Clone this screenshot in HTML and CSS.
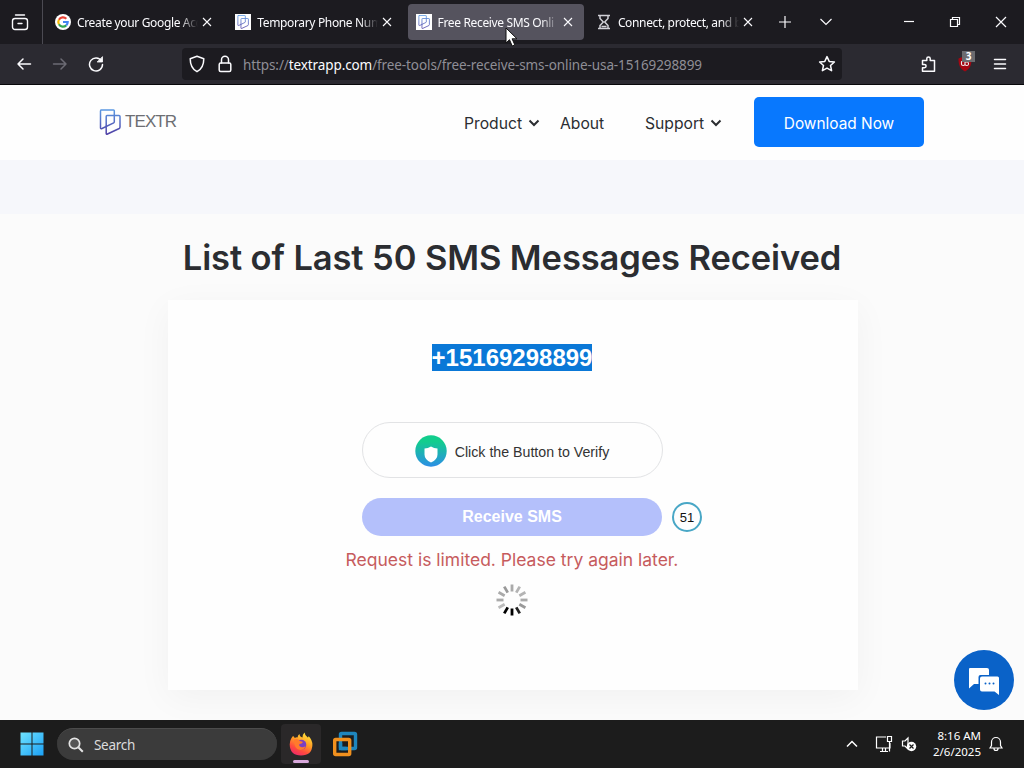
FILE: index.html
```html
<!DOCTYPE html>
<html lang="en">
<head>
    <meta charset="UTF-8">
    <meta name="viewport" content="width=device-width, initial-scale=1.0">
    <title>Free Receive SMS Online</title>
    <link rel="stylesheet" href="styles.css">
</head>
<body>
    <svg class="defs" width="0" height="0">
        <defs>
            <linearGradient id="logo-grad" x1="0" y1="0" x2="0" y2="1">
                <stop offset="0" stop-color="#5b98e2"/>
                <stop offset="1" stop-color="#4f3fa5"/>
            </linearGradient>
            <linearGradient id="shield-grad" x1="0" y1="0" x2="0" y2="1">
                <stop offset="0.2" stop-color="#12cd8d"/>
                <stop offset="1" stop-color="#2c8ee6"/>
            </linearGradient>
            <linearGradient id="win-grad" x1="0" y1="0" x2="1" y2="1">
                <stop offset="0" stop-color="#6fe3ff"/>
                <stop offset="1" stop-color="#1ba0f5"/>
            </linearGradient>
            <linearGradient id="fox-grad" x1="0.8" y1="0" x2="0.3" y2="1">
                <stop offset="0" stop-color="#ffec3d"/>
                <stop offset="0.45" stop-color="#ff9a25"/>
                <stop offset="0.75" stop-color="#ff4b3e"/>
                <stop offset="1" stop-color="#ee2a68"/>
            </linearGradient>
            <symbol id="close" viewBox="0 0 10 10"><path d="M1 1l8 8M9 1L1 9" fill="none" stroke="currentColor" stroke-width="1.1"/></symbol>
            <symbol id="textr" viewBox="0 0 22 26">
                <path d="M1.500 1h13q.8 0 .8.8v11q0 .7-.6 1L3 19.500q-1.500.6-1.500-.8V2q0-1 .8-1z M8 6.500h12q1 0 1 1v10.500q0 1-.8 1.500L8.500 25q-1.300.6-1.300-.8V7.500q0-1 .8-1z" fill="none" stroke="url(#logo-grad)" stroke-width="1.500"/>
            </symbol>
            <symbol id="chev" viewBox="0 0 12 8"><path d="M1.500 1.500L6 6l4.500-4.500" fill="none" stroke="currentColor" stroke-width="2"/></symbol>
        </defs>
    </svg>

    <div class="titlebar">
        <div class="view-btn">
            <svg width="18" height="18" viewBox="0 0 18 18" fill="none" stroke="currentColor" stroke-width="1.400" stroke-linecap="round">
                <path d="M4.500 2h9M7 10.500h4"/><rect x="1.500" y="5.500" width="15" height="11" rx="2.500"/>
            </svg>
        </div>
        <div class="tabs">
            <div class="tab">
                <svg class="favicon" viewBox="0 0 16 16" fill="none" stroke-width="2.200">
                    <circle cx="8" cy="8" r="8" fill="#fff"/>
                    <path d="M11.300 4.700A4.700 4.700 0 0 0 3.900 5.700" stroke="#ea4335"/>
                    <path d="M3.900 5.700a4.700 4.700 0 0 0 0 4.600" stroke="#fbbc05"/>
                    <path d="M3.900 10.300a4.700 4.700 0 0 0 7.300 1.100" stroke="#34a853"/>
                    <path d="M11.200 11.400A4.700 4.700 0 0 0 12.700 8H8" stroke="#4285f4"/>
                </svg>
                <span class="tab-title">Create your Google Acc</span>
                <svg class="tab-close"><use href="#close"/></svg>
            </div>
            <div class="tab">
                <span class="favicon favicon-textr"><svg width="12" height="14"><use href="#textr"/></svg></span>
                <span class="tab-title">Temporary Phone Num</span>
                <svg class="tab-close"><use href="#close"/></svg>
            </div>
            <div class="tab active">
                <span class="favicon favicon-textr"><svg width="12" height="14"><use href="#textr"/></svg></span>
                <span class="tab-title">Free Receive SMS Onli</span>
                <svg class="tab-close"><use href="#close"/></svg>
            </div>
            <div class="tab">
                <svg class="favicon" viewBox="0 0 16 16" fill="none" stroke="#d0d0d6" stroke-width="1.500">
                    <path d="M2 1.500h12M2 14.500h12M4 2v2.500L7.300 8 4 11.500V14M12 2v2.500L8.700 8l3.300 3.500V14M5.500 12.500h5"/>
                </svg>
                <span class="tab-title">Connect, protect, and b</span>
                <svg class="tab-close"><use href="#close"/></svg>
            </div>
        </div>
        <svg class="ctl new-tab" width="14" height="14" viewBox="0 0 14 14"><path d="M7 1v12M1 7h12"/></svg>
        <svg class="ctl all-tabs" width="14" height="14" viewBox="0 0 14 14"><path d="M1.500 4L7 9.500 12.500 4"/></svg>
        <div class="win-ctls">
            <svg class="ctl" width="12" height="12" viewBox="0 0 12 12"><path d="M1 5.500h10"/></svg>
            <svg class="ctl" width="12" height="12" viewBox="0 0 12 12"><path d="M1.500 3.500h7v7h-7zM3.500 3.500v-2h7v7h-2"/></svg>
            <svg class="ctl" width="12" height="12" viewBox="0 0 12 12"><path d="M1 1l10 10M11 1L1 11"/></svg>
        </div>
        <svg class="cursor" width="14" height="21" viewBox="0 0 14 21"><path d="M1 1v15l3.500-3.300 2.700 6.300 2.600-1.100-2.700-6.100H12z" fill="#fff" stroke="#111" stroke-width="1"/></svg>
    </div>

    <div class="toolbar">
        <div class="nav-btns">
            <svg width="16" height="16" viewBox="0 0 16 16"><path d="M14.500 8H2M7 3L2 8l5 5"/></svg>
            <svg class="disabled" width="16" height="16" viewBox="0 0 16 16"><path d="M1.500 8H14M9 3l5 5-5 5"/></svg>
            <svg width="16" height="16" viewBox="0 0 16 16"><path d="M13.500 5A6.500 6.500 0 1 0 14.500 8.500"/><path d="M14.500 1v5h-5z" fill="currentColor" stroke-width="0.800"/></svg>
        </div>
        <div class="urlbar">
            <svg width="16" height="18" viewBox="0 0 16 18"><path d="M8 1.300l6.800 2.400c0 6-1.800 10.300-6.800 13C3 14 1.200 9.700 1.200 3.700z"/></svg>
            <svg class="lock" width="14" height="18" viewBox="0 0 14 18"><rect x="1.200" y="8" width="11.600" height="8.500" rx="1.500"/><path d="M3.500 8V4.800a3.500 3.500 0 0 1 7 0V8"/></svg>
            <span class="url">https://<b>textrapp.com</b>/free-tools/free-receive-sms-online-usa-15169298899</span>
            <svg class="star" width="18" height="18" viewBox="0 0 18 18"><path d="M9 1.600l2.200 4.800 5.200.6-3.900 3.500 1.100 5.200L9 13.100l-4.600 2.600 1.100-5.200L1.600 7l5.200-.6z"/></svg>
        </div>
        <div class="ext-btns">
            <svg width="16" height="18" viewBox="0 0 16 18"><path d="M1.500 5.500h4.300V3.600a1.700 1.700 0 0 1 3.400 0v1.900h4.300v10.700H1.500v-3.500h2a1.600 1.600 0 0 0 0-3.200h-2z"/></svg>
            <div class="ublock">
                <svg width="16" height="16" viewBox="0 0 16 16"><path d="M8 0l6.500 2.500c0 6-1 10-6.500 13C2.500 12.500 1.500 8.500 1.500 2.500z" fill="#a50612" stroke="none"/><path d="M4.500 5.500v2.800q0 1.200 1.700 1.200T8 8.300V5.500M8 8.300q0 1.200 1.800 1.200T11.500 7.500 8.500 6" stroke="#eee" stroke-width="1.100"/></svg>
                <span class="badge">3</span>
            </div>
            <svg width="14" height="14" viewBox="0 0 14 14"><path d="M1.500 2.500h11M1.500 7h11M1.500 11.500h11"/></svg>
        </div>
    </div>

    <div class="page">
        <header class="site-header">
            <div class="brand">
                <svg width="22" height="26"><use href="#textr"/></svg>
                <span>TEXTR</span>
            </div>
            <nav class="menu">
                <a class="product">Product <svg width="12" height="8"><use href="#chev"/></svg></a>
                <a class="about">About</a>
                <a class="support">Support <svg width="12" height="8"><use href="#chev"/></svg></a>
            </nav>
            <a class="download"><span>Download Now</span></a>
        </header>
        <div class="band"></div>
        <main>
            <h1><span>List of Last 50 SMS Messages Received</span></h1>
            <div class="card">
                <div class="phone">+15169298899</div>
                <div class="verify">
                    <svg width="32" height="32" viewBox="0 0 32 32">
                        <circle cx="16" cy="16" r="15.700" fill="url(#shield-grad)"/>
                        <path d="M16 11.500q3 2 6.500 2v6q0 5-6.500 8-6.500-3-6.500-8v-6q3.500 0 6.500-2z" fill="#fff"/>
                    </svg>
                    <span>Click the Button to Verify</span>
                </div>
                <div class="receive-row">
                    <button class="receive">Receive SMS</button>
                    <span class="timer">51</span>
                </div>
                <p class="error"><span>Request is limited. Please try again later.</span></p>
                <svg class="spinner" width="32" height="32" viewBox="-16 -16 32 32" stroke-width="2.800" stroke-linecap="butt">
                    <path d="M0-8.500v-7" stroke="#aaa"/>
                    <path d="M0-8.500v-7" stroke="#b4b4b4" transform="rotate(30)"/>
                    <path d="M0-8.500v-7" stroke="#b4b4b4" transform="rotate(60)"/>
                    <path d="M0-8.500v-7" stroke="#aaa" transform="rotate(90)"/>
                    <path d="M0-8.500v-7" stroke="#999" transform="rotate(120)"/>
                    <path d="M0-8.500v-7" stroke="#222" transform="rotate(150)"/>
                    <path d="M0-8.500v-7" stroke="#000" transform="rotate(180)"/>
                    <path d="M0-8.500v-7" stroke="#000" transform="rotate(210)"/>
                    <path d="M0-8.500v-7" stroke="#bbb" transform="rotate(240)"/>
                    <path d="M0-8.500v-7" stroke="#aaa" transform="rotate(270)"/>
                    <path d="M0-8.500v-7" stroke="#aaa" transform="rotate(300)"/>
                    <path d="M0-8.500v-7" stroke="#999" transform="rotate(330)"/>
                </svg>
            </div>
        </main>
        <div class="chat">
            <svg width="32" height="30" viewBox="0 0 32 30">
                <path d="M2 1h17q2 0 2 2v5h-8.500q-2 0-2 2v7H6l-5 4.500V2q0-1 1-1z" fill="#fff"/>
                <path d="M14 9.500h15.500q1.500 0 1.500 1.500v17l-4.500-3.500H14q-2 0-2-2V11.500q0-2 2-2z" fill="#fff"/>
                <g fill="#0a62c8"><circle cx="17.500" cy="16.500" r="1"/><circle cx="21.500" cy="16.500" r="1"/><circle cx="25.500" cy="16.500" r="1"/></g>
            </svg>
        </div>
    </div>

    <div class="taskbar">
        <svg class="start" width="24" height="24" viewBox="0 0 24 24" fill="url(#win-grad)"><path d="M0.500 0.500h11v11h-11zM12.500 0.500h11v11h-11zM0.500 12.500h11v11h-11zM12.500 12.500h11v11h-11z"/></svg>
        <div class="search">
            <svg width="16" height="16" viewBox="0 0 16 16" fill="#555" stroke="#e4e4e4"><circle cx="6.500" cy="6.500" r="5.200" stroke-width="1.700"/><path d="M10.500 10.500l4.300 4.300" stroke-width="2"/></svg>
            <span>Search</span>
        </div>
        <div class="task running">
            <svg width="24" height="24" viewBox="0 0 24 24">
                <path d="M4 4q1 .5 1.800 2 1.200-.8 2.700-.6Q9 3 10.500 2q0 2.500 3 3.500Q13.500 2.500 15.500.5q.3 3 3.300 5 1-.5.700-1.500Q23.500 8 23.400 13 23 23.500 12 23.500T.700 12.500Q.700 9 2 7q.7-1.500 2-3z" fill="url(#fox-grad)"/>
                <circle cx="12.300" cy="12.800" r="5" fill="#7a3fc4"/>
                <path d="M5 7.500q4-1.500 6 1.500 2 .3 3 1-1 2-3.500 2-1 2 1.500 3t4.500-1q-1 4-5.500 4-6-.5-6-10.500z" fill="#ff7b2c"/>
            </svg>
            <i class="indicator"></i>
        </div>
        <svg class="vmware" width="26" height="26" viewBox="0 0 26 26" fill="none" stroke-width="3.400">
            <rect x="8.500" y="2.500" width="15" height="15" rx="1" stroke="#1e86bd"/>
            <rect x="2.700" y="8.500" width="15" height="15" rx="1" stroke="#f0901e"/>
            <path d="M8.500 12v5.500h6" stroke="#1e86bd"/>
        </svg>
        <div class="tray">
            <svg width="14" height="8" viewBox="0 0 14 8"><path d="M2 6.500l5-5 5 5" stroke-width="1.500"/></svg>
            <svg class="net" width="18" height="18" viewBox="0 0 18 18"><path d="M11 2H1.500v11H15V8M5 16.500h8M7.500 13v3.500M10.500 13v3.500M12.500 1.500h4v5h-4zM14.500 6.500v10"/></svg>
            <svg class="sound" width="16" height="16" viewBox="0 0 16 16"><path d="M1.500 5h2.500L7 2v11l-3-3H1.500z"/><circle cx="10.500" cy="10.500" r="4.700" fill="#fff" stroke="none"/><path d="M8.500 8.500l4 4M12.500 8.500l-4 4" stroke="#1c1c1c"/></svg>
            <div class="clock">8:16 AM<br>2/6/2025</div>
            <svg class="bell" width="14" height="16" viewBox="0 0 14 16"><path d="M1 12h12l-1.500-2.500V6a4.500 4.500 0 0 0-9 0v3.500zM5 12.500a2 2 0 0 0 4 0"/></svg>
        </div>
    </div>
</body>
</html>
```
FILE: styles.css
```css
* {
    margin: 0;
    padding: 0;
    box-sizing: border-box;
}

body {
    width: 1024px;
    height: 768px;
    display: flex;
    flex-direction: column;
    position: relative;
    overflow: hidden;
    background: #fbfbfb;
    font-family: "Noto Sans", "Open Sans", sans-serif;
}

svg {
    display: block;
    flex: none;
}

.defs {
    position: absolute;
}

/* Browser tabs */
.titlebar {
    height: 44px;
    flex: none;
    display: flex;
    align-items: center;
    background: #1c1b20;
    color: #fbfbfe;
}

.view-btn {
    width: 43px;
    height: 44px;
    padding: 13px 0 0 11px;
    border-right: 1px solid #4b4a52;
}

.tabs {
    display: flex;
    gap: 4.300px;
    margin-left: 4px;
}

.tab {
    width: 176px;
    height: 36px;
    padding: 0 11px 0 8px;
    display: flex;
    align-items: center;
    border-radius: 4px;
}

.tab.active {
    background: #55535e;
}

.favicon {
    width: 16px;
    height: 16px;
    flex: none;
}

.favicon-textr {
    display: flex;
    align-items: center;
    justify-content: center;
    background: #fff;
}

.tab-title {
    flex: 1;
    margin-left: 6px;
    padding-top: 1px;
    white-space: nowrap;
    font-size: 12px;
    line-height: 18px;
    letter-spacing: -0.350px;
    -webkit-mask-image: linear-gradient(to left, transparent 4px, #000 22px);
    mask-image: linear-gradient(to left, transparent 4px, #000 22px);
}

.tab-close {
    width: 10px;
    height: 10px;
}

.ctl {
    fill: none;
    stroke: #fbfbfe;
    stroke-width: 1.200;
}

.new-tab {
    margin-left: 14px;
}

.all-tabs {
    margin-left: 27px;
}

.win-ctls {
    display: flex;
    gap: 34px;
    margin-left: auto;
    margin-right: 17px;
}

.cursor {
    position: absolute;
    left: 505px;
    top: 27px;
    z-index: 2;
}

/* Address bar */
.toolbar {
    height: 41px;
    flex: none;
    display: flex;
    align-items: center;
    background: #2b2a31;
    border-bottom: 1px solid #08080b;
    color: #fbfbfe;
}

.toolbar svg {
    fill: none;
    stroke: currentColor;
    stroke-width: 1.500;
    stroke-linejoin: round;
    stroke-linecap: round;
}

.nav-btns {
    display: flex;
    gap: 20px;
    margin-left: 16px;
}

.nav-btns .disabled {
    color: #6c6b74;
}

.urlbar {
    width: 660px;
    height: 32px;
    margin-left: 78px;
    padding: 0 6px 0 7px;
    display: flex;
    align-items: center;
    border-radius: 4px;
    background: #1c1b20;
}

.lock {
    margin-left: 13px;
}

.url {
    margin-left: 11px;
    padding-top: 2px;
    font-size: 13.500px;
    letter-spacing: -0.100px;
    white-space: nowrap;
    color: #8f8e96;
}

.url b {
    font-weight: 400;
    color: #fbfbfe;
}

.star {
    margin-left: auto;
}

.ext-btns {
    flex: 1;
    display: flex;
    align-items: center;
    justify-content: flex-end;
    gap: 20px;
    padding-right: 17px;
}

.ublock {
    position: relative;
}

.badge {
    position: absolute;
    left: 5px;
    top: -5px;
    width: 13px;
    height: 11px;
    background: #6b6b6f;
    color: #fff;
    font-size: 10px;
    font-weight: 700;
    line-height: 11px;
    text-align: center;
}

/* Site */
.page {
    height: 635px;
    flex: none;
    position: relative;
    overflow: hidden;
    background: #fbfbfb;
    font-family: Inter, sans-serif;
    color: #2b2d31;
}

.site-header {
    height: 75px;
    padding: 0 100px 1px 99px;
    display: flex;
    align-items: center;
    background: #fefefe;
}

.brand {
    display: flex;
    align-items: center;
    gap: 4px;
    margin-top: -1px;
    color: #6d6e73;
    font-family: "Liberation Sans", sans-serif;
    font-size: 17px;
    letter-spacing: -0.900px;
}

.menu {
    display: flex;
    margin-left: auto;
    padding-top: 2px;
    font-size: 15.700px;
}

.menu a {
    display: flex;
    align-items: center;
    justify-content: space-between;
}

.product {
    width: 76px;
}

.about {
    margin-left: 20px;
    width: 45px;
}

.support {
    margin-left: 40px;
    width: 77px;
}

.download {
    width: 170px;
    height: 50px;
    margin-left: 32px;
    display: flex;
    align-items: center;
    justify-content: center;
    padding-top: 2px;
    border-radius: 5px;
    background: #0878fe;
    color: #fff;
    font-size: 15.400px;
}

.band {
    height: 54px;
    background: #f6f7fb;
}

h1 {
    padding-top: 21px;
    height: 86px;
    text-align: center;
    font-size: 34.500px;
    font-weight: 600;
    letter-spacing: -0.100px;
    line-height: 46px;
    white-space: nowrap;
}

.card {
    width: 690px;
    height: 390px;
    margin-left: 168px;
    padding-right: 2px;
    display: flex;
    flex-direction: column;
    align-items: center;
    background: #fefefe;
    box-shadow: 0 8px 34px rgba(0, 0, 0, 0.045);
}

.phone {
    margin-top: 44px;
    height: 27px;
    background: #0a78d7;
    color: #fff;
    font-family: "Liberation Sans", sans-serif;
    font-size: 24px;
    font-weight: 700;
    line-height: 27px;
}

.verify {
    width: 301px;
    height: 56px;
    margin-top: 51px;
    padding-top: 1px;
    display: flex;
    align-items: center;
    justify-content: center;
    gap: 8px;
    border: 1px solid #e2e3e5;
    border-radius: 28px;
    font-family: "Liberation Sans", sans-serif;
    font-size: 14.200px;
    color: #333;
}

.verify span {
    padding-top: 2px;
}

.receive-row {
    position: relative;
    margin-top: 20px;
}

.receive {
    display: block;
    width: 300px;
    height: 38px;
    border: none;
    border-radius: 19px;
    background: #b4c0fb;
    color: #fff;
    font-family: "Liberation Sans", sans-serif;
    font-size: 16px;
    font-weight: 700;
}

/* countdown next to the button */
.timer {
    position: absolute;
    left: 310px;
    top: 4px;
    width: 30px;
    height: 30px;
    border: 2px solid #49a7c6;
    border-radius: 50%;
    font-size: 13px;
    line-height: 28px;
    text-align: center;
    font-family: "Liberation Sans", sans-serif;
    color: #111;
}

.error {
    margin-top: 12px;
    color: #c65b5d;
    font-size: 17.500px;
    line-height: 24px;
    white-space: nowrap;
}

.spinner {
    margin-top: 12px;
}

.chat {
    position: absolute;
    left: 954px;
    top: 565px;
    width: 60px;
    height: 60px;
    padding-top: 4px;
    display: flex;
    align-items: center;
    justify-content: center;
    border-radius: 50%;
    background: #0a62c8;
}

/* Windows taskbar */
.taskbar {
    height: 48px;
    flex: none;
    display: flex;
    align-items: center;
    background: #1c1c1c;
    color: #fff;
}

.start {
    margin-left: 20px;
}

.search {
    width: 220px;
    height: 32px;
    margin-left: 13px;
    padding-left: 11px;
    display: flex;
    align-items: center;
    gap: 10px;
    border-radius: 16px;
    border-top: 1px solid #4c4c4c;
    background: #3b3b3b;
    color: #dcdcdc;
    font-size: 13.500px;
    letter-spacing: -0.300px;
}

.task {
    width: 40px;
    height: 40px;
    margin-left: 4px;
    display: flex;
    flex-direction: column;
    align-items: center;
    padding-top: 8px;
    border-radius: 4px;
    background: #2a2829;
}

.indicator {
    width: 16px;
    height: 3px;
    margin-top: 4px;
    border-radius: 2px;
    background: #d9a9dc;
}

.vmware {
    margin-left: 11px;
}

.tray {
    display: flex;
    align-items: center;
    margin-left: auto;
    margin-right: 21px;
}

.tray svg {
    fill: none;
    stroke: #fff;
    stroke-width: 1.200;
}

.net {
    margin-left: 16px;
}

.sound {
    margin-left: 8px;
}

.clock {
    width: 64px;
    text-align: right;
    font-size: 11.500px;
    line-height: 16px;
}

.bell {
    margin-left: 8px;
}
```
